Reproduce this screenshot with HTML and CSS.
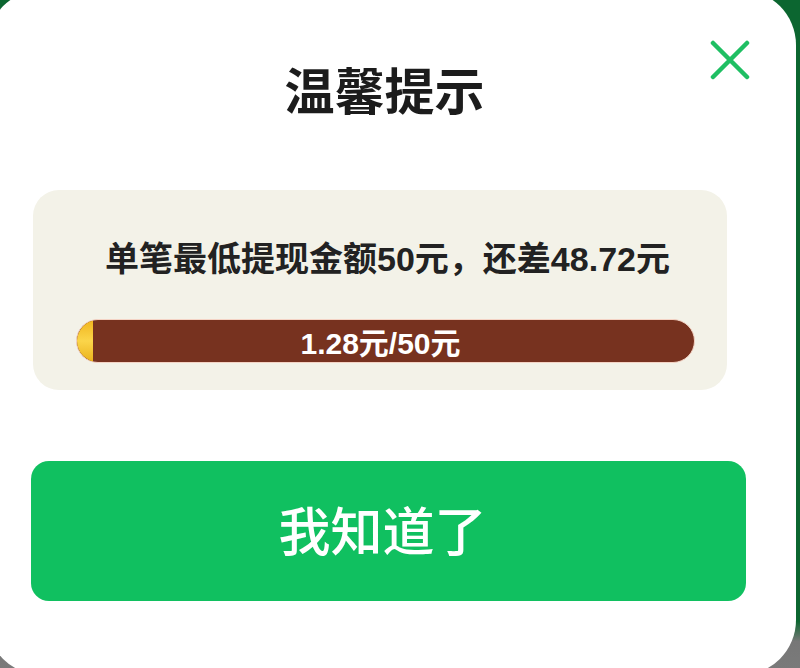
FILE: index.html
```html
<!DOCTYPE html>
<html>
<head>
  <meta charset="utf-8">
  <title>温馨提示</title>
  <link rel="stylesheet" href="styles.css">
</head>
<body>
  <div class="dialog">
    <button class="close-btn" aria-label="关闭">
      <svg viewBox="0 0 40 40" width="40" height="40">
        <path d="M3 3 L37 37 M37 3 L3 37" stroke="#1fbf63" stroke-width="4.5" stroke-linecap="round" fill="none"/>
      </svg>
    </button>

    <h1 class="title">温馨提示</h1>

    <div class="card">
      <p class="card-text">单笔最低提现金额50元，还差48.72元</p>
      <div class="progress">
        <div class="progress-fill" style="width: 2.56%"></div>
        <span class="progress-label">1.28元/50元</span>
      </div>
    </div>

    <button class="ok-btn">我知道了</button>
  </div>
</body>
</html>
```

FILE: styles.css
```css
html, body {
  margin: 0;
  padding: 0;
}

body {
  width: 800px;
  height: 668px;
  overflow: hidden;
  background: linear-gradient(to bottom, #0c6630 0%, #0c6630 93%, #777 96%, #7a7a7a 100%);
  font-family: "Liberation Sans", "Noto Sans CJK SC", sans-serif;
}

.dialog {
  position: relative;
  box-sizing: border-box;
  width: 809px;
  height: 685px;
  margin: -10px 0 0 -13px;
  padding-top: 79px;
  background: #fff;
  border-radius: 55px;
}

.close-btn {
  position: absolute;
  top: 50px;
  right: 46px;
  width: 40px;
  height: 40px;
  padding: 0;
  border: 0;
  background: none;
}

.close-btn svg {
  display: block;
}

.title {
  margin: 0 0 73px;
  padding-right: 14px;
  font-size: 50px;
  line-height: 48px;
  font-weight: bold;
  text-align: center;
  color: #1c1c1c;
}

.card {
  box-sizing: border-box;
  width: 694px;
  height: 200px;
  margin-left: 46px;
  padding: 52px 32px 0 43px;
  background: #f3f2e8;
  border-radius: 26px;
}

.card-text {
  margin: 0 0 43px;
  padding-left: 4px;
  font-size: 34px;
  line-height: 34px;
  font-weight: bold;
  text-align: center;
  white-space: nowrap;
  color: #222;
}

.progress {
  position: relative;
  box-sizing: border-box;
  height: 44px;
  border-radius: 22px;
  background: #77321f;
  border: 1px solid #f4d3c4;
  overflow: hidden;
  display: flex;
  align-items: center;
  justify-content: center;
}

.progress-fill {
  position: absolute;
  left: 0;
  top: 0;
  bottom: 0;
  background: linear-gradient(to bottom, #f0b51e 0%, #fbd54a 50%, #eab21c 100%);
}

.progress-label {
  position: relative;
  margin-right: 10px;
  font-size: 30px;
  font-weight: bold;
  color: #fff;
}

.ok-btn {
  display: block;
  width: 715px;
  height: 140px;
  margin: 71px 0 0 44px;
  padding: 0 12px 6px 0;
  border: 0;
  border-radius: 18px;
  background: #10c060;
  color: #fff;
  font-family: "Noto Sans CJK SC", sans-serif;
  font-size: 52px;
  font-weight: 500;
}
```
